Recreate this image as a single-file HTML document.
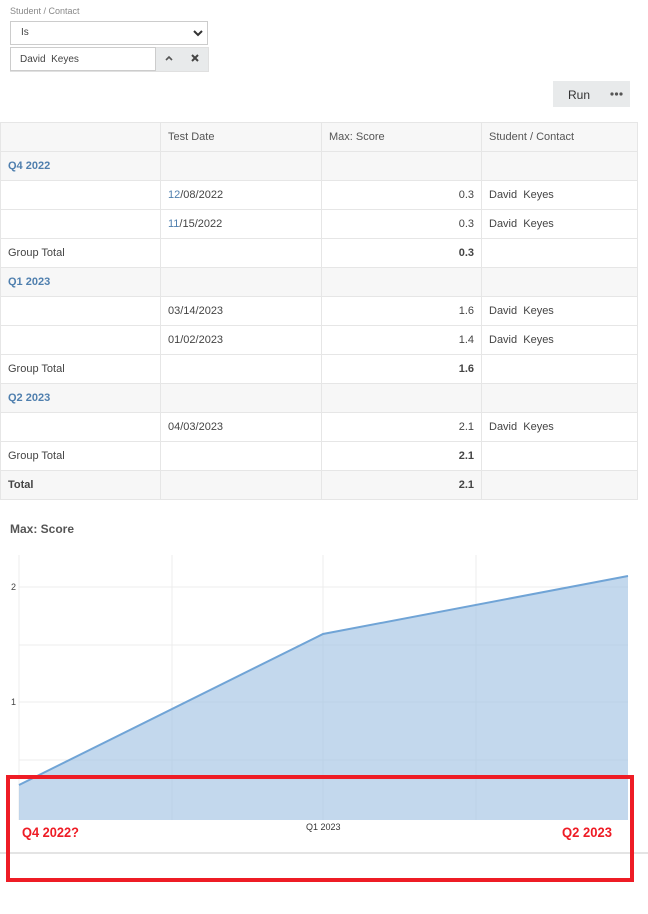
<!DOCTYPE html>
<html><head><meta charset="utf-8"><style>
body{margin:0;width:648px;height:914px;background:#fff;font-family:"Liberation Sans",sans-serif;color:#444;position:relative;overflow:hidden}
.abs{position:absolute}
table{position:absolute;left:0;top:122px;width:638px;border-collapse:collapse;font-size:11px}
td{height:28px;border:1px solid #e6e6e6;padding:0 7px;color:#444}
tr.g td{background:#f7f7f7}
td.r{text-align:right}
.blue{color:#4f7fae;font-weight:bold}
.b{font-weight:bold}
.h{color:#555}
</style></head><body>
<div class="abs" style="left:10px;top:6px;font-size:9px;color:#888">Student / Contact</div>
<div class="abs" style="left:10px;top:21px;width:196px;height:22px;border:1px solid #ccc;font-size:10px;line-height:22px;"><span style="margin-left:10px">Is</span>
<svg class="abs" style="right:4px;top:7px" width="10" height="8"><path d="M1 2 L5 6 L9 2" stroke="#333" stroke-width="2" fill="none"/></svg></div>
<div class="abs" style="left:10px;top:47px;width:197px;height:23px;background:#e8eaeb;border:1px solid #e0e0e0"></div>
<div class="abs" style="left:10px;top:47px;width:144px;height:22px;border:1px solid #ccc;background:#fff;font-size:10px;"><span class="abs" style="left:9px;top:6px">David&nbsp; Keyes</span></div>
<svg class="abs" style="left:165px;top:55px" width="8" height="6"><path d="M1 5 L4 2 L7 5" stroke="#555" stroke-width="1.6" fill="none"/></svg>
<svg class="abs" style="left:191px;top:54px" width="8" height="8"><path d="M1 1 L7 7 M7 1 L1 7" stroke="#444" stroke-width="2" fill="none"/></svg>
<div class="abs" style="left:553px;top:81px;width:77px;height:26px;background:#e8eaeb"></div>
<div class="abs" style="left:568px;top:88px;font-size:12px;color:#333">Run</div>
<svg class="abs" style="left:610px;top:92px" width="14" height="4"><circle cx="2" cy="2" r="1.6" fill="#555"/><circle cx="6.5" cy="2" r="1.6" fill="#555"/><circle cx="11" cy="2" r="1.6" fill="#555"/></svg>
<table>
<tr class="g"><td style="width:145px"></td><td style="width:146px" class="h">Test Date</td><td style="width:145px" class="h">Max: Score</td><td class="h">Student / Contact</td></tr>
<tr class="g"><td class="blue">Q4 2022</td><td></td><td></td><td></td></tr>
<tr><td></td><td><span style="color:#4f7fae">12</span>/08/2022</td><td class="r">0.3</td><td>David&nbsp; Keyes</td></tr>
<tr><td></td><td><span style="color:#4f7fae">11</span>/15/2022</td><td class="r">0.3</td><td>David&nbsp; Keyes</td></tr>
<tr><td>Group Total</td><td></td><td class="r b">0.3</td><td></td></tr>
<tr class="g"><td class="blue">Q1 2023</td><td></td><td></td><td></td></tr>
<tr><td></td><td>03/14/2023</td><td class="r">1.6</td><td>David&nbsp; Keyes</td></tr>
<tr><td></td><td>01/02/2023</td><td class="r">1.4</td><td>David&nbsp; Keyes</td></tr>
<tr><td>Group Total</td><td></td><td class="r b">1.6</td><td></td></tr>
<tr class="g"><td class="blue">Q2 2023</td><td></td><td></td><td></td></tr>
<tr><td></td><td>04/03/2023</td><td class="r">2.1</td><td>David&nbsp; Keyes</td></tr>
<tr><td>Group Total</td><td></td><td class="r b">2.1</td><td></td></tr>
<tr class="g"><td class="b">Total</td><td></td><td class="r b">2.1</td><td></td></tr>
</table>
<div class="abs" style="left:10px;top:522px;font-size:12px;font-weight:bold;color:#555">Max: Score</div>
<svg class="abs" style="left:0;top:0" width="648" height="914">
<g stroke="#ececec" stroke-width="1">
<line x1="19" y1="587" x2="628" y2="587"/><line x1="19" y1="645" x2="628" y2="645"/>
<line x1="19" y1="702" x2="628" y2="702"/><line x1="19" y1="760" x2="628" y2="760"/>
<line x1="172" y1="555" x2="172" y2="820"/><line x1="323" y1="555" x2="323" y2="820"/><line x1="476" y1="555" x2="476" y2="820"/>
<line x1="19" y1="555" x2="19" y2="820"/>
<line x1="0" y1="853" x2="648" y2="853" stroke="#e4e4e4" stroke-width="2"/>
</g>
<path d="M19 785 L323 634 L628 576 L628 820 L19 820Z" fill="#a9c8e6" fill-opacity="0.7"/>
<path d="M19 785 L323 634 L628 576" stroke="#70a4d6" stroke-width="2" fill="none"/>
<text x="11" y="590" font-size="9" fill="#444" font-family="Liberation Sans">2</text>
<text x="11" y="705" font-size="9" fill="#444" font-family="Liberation Sans">1</text>
<text x="306" y="830" font-size="9" fill="#333" font-family="Liberation Sans">Q1 2023</text>
<rect x="8" y="777" width="624" height="103" fill="none" stroke="#ee1c25" stroke-width="4"/>
<text x="22" y="837" font-size="14" font-weight="bold" fill="#ee1c25" font-family="Liberation Sans" textLength="57" lengthAdjust="spacingAndGlyphs">Q4 2022?</text>
<text x="562" y="837" font-size="14" font-weight="bold" fill="#ee1c25" font-family="Liberation Sans" textLength="50" lengthAdjust="spacingAndGlyphs">Q2 2023</text>
</svg>
</body></html>
